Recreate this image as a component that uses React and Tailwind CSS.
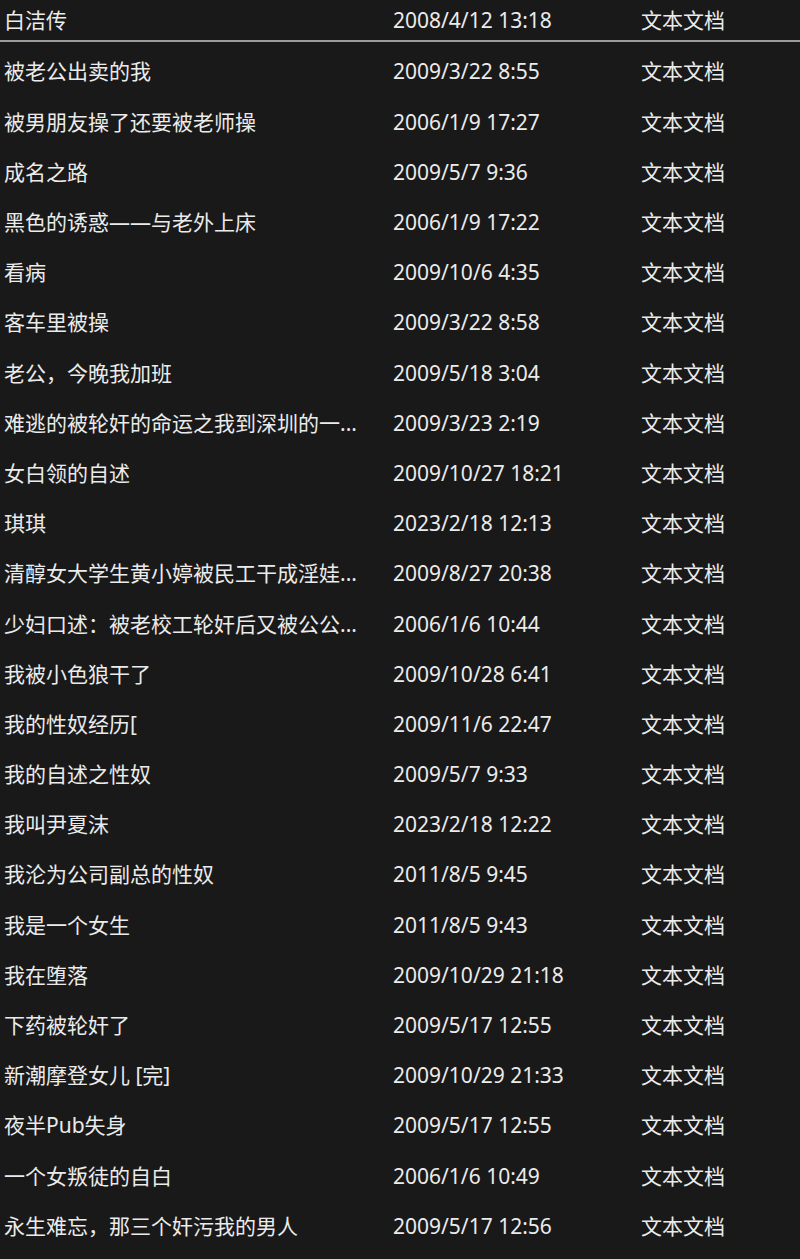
import React from 'react';

const files = [
  ['白洁传', '2008/4/12 13:18'],
  ['被老公出卖的我', '2009/3/22 8:55'],
  ['被男朋友操了还要被老师操', '2006/1/9 17:27'],
  ['成名之路', '2009/5/7 9:36'],
  ['黑色的诱惑——与老外上床', '2006/1/9 17:22'],
  ['看病', '2009/10/6 4:35'],
  ['客车里被操', '2009/3/22 8:58'],
  ['老公，今晚我加班', '2009/5/18 3:04'],
  ['难逃的被轮奸的命运之我到深圳的一...', '2009/3/23 2:19'],
  ['女白领的自述', '2009/10/27 18:21'],
  ['琪琪', '2023/2/18 12:13'],
  ['清醇女大学生黄小婷被民工干成淫娃...', '2009/8/27 20:38'],
  ['少妇口述：被老校工轮奸后又被公公...', '2006/1/6 10:44'],
  ['我被小色狼干了', '2009/10/28 6:41'],
  ['我的性奴经历[', '2009/11/6 22:47'],
  ['我的自述之性奴', '2009/5/7 9:33'],
  ['我叫尹夏沫', '2023/2/18 12:22'],
  ['我沦为公司副总的性奴', '2011/8/5 9:45'],
  ['我是一个女生', '2011/8/5 9:43'],
  ['我在堕落', '2009/10/29 21:18'],
  ['下药被轮奸了', '2009/5/17 12:55'],
  ['新潮摩登女儿 [完]', '2009/10/29 21:33'],
  ['夜半Pub失身', '2009/5/17 12:55'],
  ['一个女叛徒的自白', '2006/1/6 10:49'],
  ['永生难忘，那三个奸污我的男人', '2009/5/17 12:56'],
];

const Row = ({ name, date, className = '' }) => (
  <div className={`flex items-center pt-[2px] ${className}`}>
    <div className="w-[393px] pl-[4px] whitespace-nowrap">{name}</div>
    <div className="w-[248px] whitespace-nowrap">{date}</div>
    <div className="whitespace-nowrap">文本文档</div>
  </div>
);

export default function App() {
  return (
    <div
      className="w-[800px] h-[1259px] bg-[#191919] text-[#ebebeb] text-[21px] leading-[1.3] overflow-hidden"
      style={{ fontFamily: '"Noto Sans", "Noto Sans CJK SC", sans-serif' }}
    >
      <Row name={files[0][0]} date={files[0][1]} className="h-[40px]" />
      <div className="h-[2px] bg-[#9c9c9c] mb-[4px]" />
      {files.slice(1).map(([name, date]) => (
        <Row key={name} name={name} date={date} className="h-[50.2px]" />
      ))}
    </div>
  );
}
